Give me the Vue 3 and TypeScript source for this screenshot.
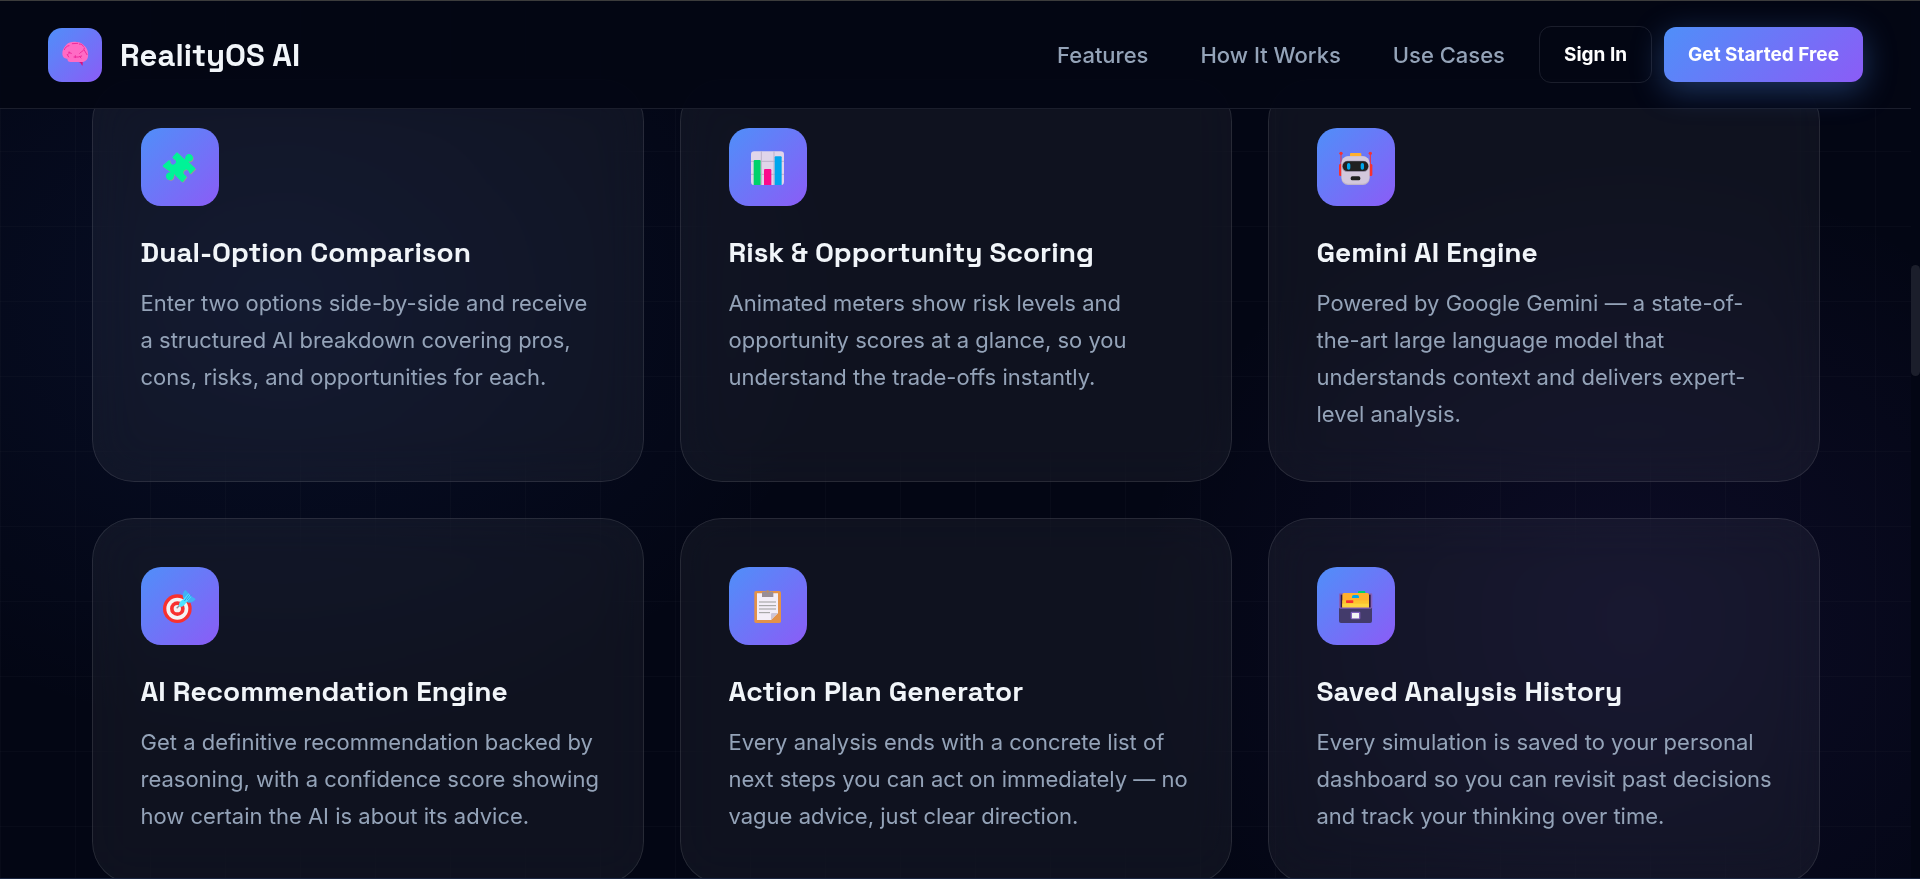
<script setup lang="ts">
type IconName = 'puzzle' | 'chart' | 'robot' | 'target' | 'clipboard' | 'archive'

interface Feature {
  icon: IconName
  title: string
  text: string
}

const links: { label: string; href: string }[] = [
  { label: 'Features', href: '#features' },
  { label: 'How It Works', href: '#how-it-works' },
  { label: 'Use Cases', href: '#use-cases' },
]

const features: Feature[] = [
  {
    icon: 'puzzle',
    title: 'Dual-Option Comparison',
    text: 'Enter two options side-by-side and receive a structured AI breakdown covering pros, cons, risks, and opportunities for each.',
  },
  {
    icon: 'chart',
    title: 'Risk & Opportunity Scoring',
    text: 'Animated meters show risk levels and opportunity scores at a glance, so you understand the trade-offs instantly.',
  },
  {
    icon: 'robot',
    title: 'Gemini AI Engine',
    text: 'Powered by Google Gemini — a state-of-the-art large language model that understands context and delivers expert-level analysis.',
  },
  {
    icon: 'target',
    title: 'AI Recommendation Engine',
    text: 'Get a definitive recommendation backed by reasoning, with a confidence score showing how certain the AI is about its advice.',
  },
  {
    icon: 'clipboard',
    title: 'Action Plan Generator',
    text: 'Every analysis ends with a concrete list of next steps you can act on immediately — no vague advice, just clear direction.',
  },
  {
    icon: 'archive',
    title: 'Saved Analysis History',
    text: 'Every simulation is saved to your personal dashboard so you can revisit past decisions and track your thinking over time.',
  },
]
</script>

<template>
  <div class="page">
    <header class="nav">
      <a class="brand" href="#">
        <span class="logo">
          <svg viewBox="90 90 90 90" aria-hidden="true">
            <path d="M143 153l15-1v14c0 1-2 1-3-1-2-5-4-8-12-10z" fill="#d6127f" />
            <path d="M97 133c-1-12 5-22 12-29 8-8 20-10 31-8 9 0 18 5 23 11 7 6 11 14 11 23 2 13-3 22-12 25-5 2-11 1-16 1h-24c-7 0-10-4-10-10-8 1-14-4-15-13z" fill="#ff6bc4" />
            <path d="M103 119c3-7 7-11 14-12M127 101l16-1M148 102c6 0 10 2 12 7M113 134c3-1 5-4 5-8M116 127l8 3M112 134l4 7M149 130c5-7 13-5 14-16M163 121l8 13M132 141h13l10-3M136 137v6M149 140l4 4" fill="none" stroke="#ee2a9b" stroke-width="3" stroke-linecap="round" />
          </svg>
        </span>
        <span class="brand-name">RealityOS AI</span>
      </a>
      <nav class="links" aria-label="Main">
        <a v-for="link in links" :key="link.label" :href="link.href">{{ link.label }}</a>
      </nav>
      <div class="actions">
        <button type="button" class="btn ghost">Sign In</button>
        <button type="button" class="btn primary">Get Started Free</button>
      </div>
    </header>

    <main id="features" class="features">
      <article v-for="feature in features" :key="feature.title" class="card">
        <span class="tile">
          <svg v-if="feature.icon === 'puzzle'" viewBox="96 87 108 108" aria-hidden="true">
            <path d="M99 136l19-17c2 3 2 11 7 14 6 3 14-2 13-9-1-6-9-6-11-12l12-14q2-2 4 0l22 21c0-8 3-14 8-16 8-3 16 3 16 11-1 8-6 11-14 11l20 19q2 2 0 4l-14 14c-5-3-4-11-9-13-6-2-13 3-12 10 1 6 9 7 10 12l-11 14q-2 2-4 0l-23-23c1 9-2 16-9 18-8 2-16-5-15-13 1-7 7-11 15-10L99 140q-2-2 0-4z" transform="translate(2 2)" fill="#9b9a91" />
            <path d="M99 136l19-17c2 3 2 11 7 14 6 3 14-2 13-9-1-6-9-6-11-12l12-14q2-2 4 0l22 21c0-8 3-14 8-16 8-3 16 3 16 11-1 8-6 11-14 11l20 19q2 2 0 4l-14 14c-5-3-4-11-9-13-6-2-13 3-12 10 1 6 9 7 10 12l-11 14q-2 2-4 0l-23-23c1 9-2 16-9 18-8 2-16-5-15-13 1-7 7-11 15-10L99 140q-2-2 0-4z" fill="#00f397" />
          </svg>

          <svg v-else-if="feature.icon === 'chart'" viewBox="90 87 108 108" aria-hidden="true">
            <rect x="93" y="94" width="99" height="101" rx="10" fill="#e0d5ea" />
            <path d="M93 124h99M93 163h99M124 94v101M162 94v101" stroke="#bdb1c9" stroke-width="3" />
            <path d="M101 195v-72q0-3 3-3h15q3 0 3 3v72z" fill="#00d26a" />
            <path d="M132 195v-44q0-4 3-4h16q3 0 3 4v44z" fill="#fc0a8d" />
            <path d="M164 195v-83q0-3 3-3h15q3 0 3 3v83z" fill="#00a6ed" />
          </svg>

          <svg v-else-if="feature.icon === 'robot'" viewBox="99 87 108 108" aria-hidden="true">
            <path d="M108 101v40M196 101v40" stroke="#f8312f" stroke-width="3" />
            <circle cx="108" cy="100" r="5" fill="#f8312f" />
            <circle cx="196" cy="100" r="5" fill="#f8312f" />
            <rect x="102" y="132" width="12" height="36" rx="4" fill="#f8312f" />
            <rect x="190" y="132" width="12" height="36" rx="4" fill="#f8312f" />
            <rect x="135" y="99" width="34" height="14" rx="3" fill="#ffb02e" />
            <rect x="109" y="109" width="85" height="86" rx="20" fill="#bfb4c9" />
            <rect x="110" y="109" width="83" height="82" rx="19" fill="#d3c8dc" />
            <rect x="111" y="122" width="80" height="34" rx="16" fill="#998fa5" />
            <rect x="113" y="124" width="77" height="29" rx="14" fill="#212121" />
            <rect x="126" y="129" width="10" height="20" rx="5" fill="#00a6ed" />
            <rect x="167" y="129" width="10" height="20" rx="5" fill="#00a6ed" />
            <rect x="137" y="169" width="29" height="12" rx="5" fill="#212121" />
          </svg>

          <svg v-else-if="feature.icon === 'target'" viewBox="96 81 108 108" aria-hidden="true">
            <circle cx="142" cy="143" r="43" fill="#f8312f" />
            <circle cx="142" cy="143" r="33" fill="#f4f4f4" />
            <circle cx="142" cy="143" r="22" fill="#f8312f" />
            <circle cx="142" cy="143" r="11" fill="#f4f4f4" />
            <path d="M140 142l10-10" stroke="#8f8995" stroke-width="4" />
            <path d="M159 110c-2-8 0-18 7-24l8 9 2 9 8 2 13 8c-4 7-12 11-23 11z" fill="#3fb0f5" />
            <path d="M147 137c-2-8 2-16 10-20l19-20 8 10-18 21c-6 8-12 11-19 9z" fill="#50e2ff" />
            <path d="M164 119l13-18M172 116l12-14" stroke="#299bed" stroke-width="3" stroke-linecap="round" />
          </svg>

          <svg v-else-if="feature.icon === 'clipboard'" viewBox="90 81 108 108" aria-hidden="true">
            <rect x="103" y="90" width="80" height="96" rx="5" fill="#e39249" />
            <path d="M111 97h63v59l-21 21h-42z" fill="#f3eef8" />
            <path d="M174 156l-21 21v-17q0-4 4-4z" fill="#cdc4d6" />
            <path d="M126 95q0-3 3-3h7q2-5 7-5t7 5h7q3 0 3 3v13h-34z" fill="#998e96" />
            <circle cx="143" cy="92" r="3" fill="#c98b57" />
            <path d="M117 123h51M117 134h51M117 144h51M117 155h33" stroke="#9b9b9b" stroke-width="3" />
          </svg>

          <svg v-else viewBox="99 81 108 108" aria-hidden="true">
            <path d="M102 145v-44q0-4 4-4h92q4 0 4 4v44z" fill="#8361bd" />
            <path d="M107 101h90v40h-90z" fill="#321b41" />
            <rect x="159" y="90" width="22" height="12" rx="3" fill="#00d26a" />
            <path d="M112 141v-40q0-5 5-5h70q5 0 5 5v40z" fill="#ffb02e" />
            <path d="M112 118h80v22h-80z" fill="#fcc32f" />
            <path d="M112 128h80v11h-80z" fill="#fcd53f" />
            <path d="M141 111v-4q0-5 5-5h11q5 0 5 5v4z" fill="#00a6ed" />
            <rect x="123" y="118" width="22" height="8" rx="2" fill="#f8312f" />
            <path d="M102 142h99v38q0 6-6 6h-87q-6 0-6-6z" fill="#433b6b" />
            <path d="M105 141h93" stroke="#8b67c6" stroke-width="3" />
            <rect x="137" y="152" width="29" height="23" rx="3" fill="#8361bd" />
            <rect x="141" y="156" width="21" height="16" fill="#f4f4f4" />
          </svg>
        </span>
        <h3>{{ feature.title }}</h3>
        <p>{{ feature.text }}</p>
      </article>
    </main>

    <div class="scroll-track" aria-hidden="true"><div class="scroll-thumb"></div></div>
  </div>
</template>

<style>
body {
  background: #030614;
}
</style>

<style scoped>
.page {
  --accent: linear-gradient(135deg, #4f8ff9, #8b5cf6);
  position: relative;
  box-sizing: border-box;
  height: 100vh;
  padding-right: 9px;
  overflow: hidden;
  color: #f1f5f9;
  font-family: Inter, "Liberation Sans", sans-serif;
  border-top: 1px solid #3c3c3c;
  border-bottom: 1px solid #1a2540;
  background:
    linear-gradient(rgba(255, 255, 255, 0.02) 1px, transparent 1px) 0 0 / 75px 75px,
    linear-gradient(90deg, rgba(255, 255, 255, 0.02) 1px, transparent 1px) 0 0 / 75px 75px,
    radial-gradient(ellipse 560px 440px at 280px 300px, rgba(59, 110, 246, 0.08), transparent),
    radial-gradient(ellipse 500px 460px at 1630px 620px, rgba(120, 80, 246, 0.08), transparent),
    #030614;
}

.nav {
  position: absolute;
  inset: 0 9px auto 0;
  z-index: 2;
  display: flex;
  align-items: center;
  box-sizing: border-box;
  height: 108px;
  padding: 0 48px;
  background: rgba(3, 6, 20, 0.97);
  border-bottom: 1px solid #1b1e2c;
}

.brand {
  display: flex;
  align-items: center;
  gap: 18px;
  color: inherit;
  text-decoration: none;
}

.logo,
.tile {
  display: flex;
  align-items: center;
  justify-content: center;
  background: var(--accent);
}

.logo {
  width: 54px;
  height: 54px;
  border-radius: 14px;
}

.logo svg {
  width: 30px;
  height: 30px;
}

.brand-name {
  font-family: "Space Grotesk", Inter, sans-serif;
  font-size: 31px;
  font-weight: 700;
}

.links {
  display: flex;
  gap: 52px;
  margin-left: auto;
}

.links a {
  color: #94a3b8;
  font-size: 22px;
  font-weight: 500;
  line-height: 28px;
  text-decoration: none;
}

.actions {
  display: flex;
  align-items: center;
  gap: 12px;
  margin-left: 34px;
}

.btn {
  padding: 0 24px;
  color: #ffffff;
  font: 700 19px Inter, sans-serif;
  border: 0;
  border-radius: 12px;
}

.ghost {
  height: 57px;
  background: transparent;
  border: 1px solid #1b1e2c;
}

.primary {
  height: 55px;
  background: var(--accent);
  box-shadow: 0 8px 32px rgba(79, 143, 249, 0.35);
}

.features {
  display: grid;
  grid-template-columns: repeat(3, minmax(0, 1fr));
  gap: 36px;
  max-width: 1728px;
  margin: 0 auto;
  padding-top: 78px;
}

.card {
  padding: 48px 40px 48px 48px;
  background: rgba(255, 255, 255, 0.05);
  border: 1px solid rgba(255, 255, 255, 0.1);
  border-radius: 42px;
  backdrop-filter: blur(24px);
}

.tile {
  width: 78px;
  height: 78px;
  border-radius: 20px;
}

.tile svg {
  width: 36px;
  height: 36px;
}

h3 {
  margin: 28px 0 15px;
  font-family: "Space Grotesk", Inter, sans-serif;
  font-size: 28px;
  font-weight: 700;
  line-height: 36px;
}

p {
  margin: 0;
  color: #94a3b8;
  font-size: 22px;
  line-height: 37px;
}

.scroll-track {
  position: absolute;
  inset: 0 0 0 auto;
  width: 9px;
  background: #030614;
}

.scroll-thumb {
  height: 111px;
  margin-top: 264px;
  background: #1b1e2b;
  border-radius: 5px;
}
</style>
